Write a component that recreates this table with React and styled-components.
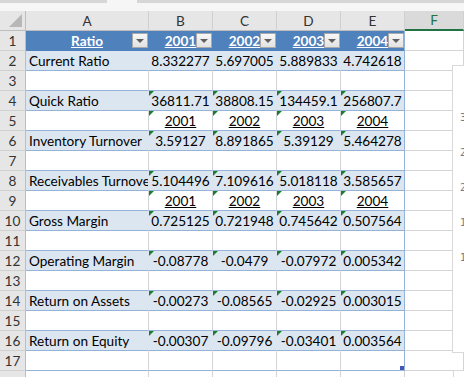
import React from 'react';
import styled, { createGlobalStyle, css } from 'styled-components';

const GlobalStyle = createGlobalStyle`
  body {
    margin: 0;
    background: #fff;
    font-family: Lato, "Liberation Sans", sans-serif;
    overflow: hidden;
  }
`;

const Page = styled.div`
  position: relative;
  width: 464px;
  height: 377px;
  overflow: hidden;
`;

const TopStrip = styled.div`
  height: 11px;
  display: flex;
  align-items: flex-start;
  background: #f6f6f6;
`;

const StripEdge = styled.div`
  height: 3px;
  width: ${(p) => (p.$w ? `${p.$w}px` : 'auto')};
  flex: ${(p) => (p.$w ? 'none' : 1)};
  background: ${(p) => p.$color};
`;

const Sheet = styled.div`
  display: grid;
  grid-template-columns: 26px 123px repeat(4, 64px) 59px;
  grid-auto-rows: 20px;
  font-size: 13.6px;
`;

const Corner = styled.div`
  position: relative;
  box-sizing: border-box;
  background: #e6e6e6;
  border-right: 1px solid #bdbdbd;
  border-bottom: 1px solid #bdbdbd;

  &::after {
    content: '';
    position: absolute;
    right: 3px;
    bottom: 3px;
    border-left: 13px solid transparent;
    border-bottom: 13px solid #b7b7b7;
  }
`;

const ColHead = styled.div`
  box-sizing: border-box;
  display: flex;
  align-items: center;
  justify-content: center;
  background: ${(p) => (p.$active ? '#dadada' : '#e6e6e6')};
  color: ${(p) => (p.$active ? '#217346' : '#333')};
  border-right: 1px solid #d0d0d0;
  border-bottom: ${(p) => (p.$active ? '2px solid #217346' : '1px solid #bdbdbd')};
`;

const RowHead = styled.div`
  box-sizing: border-box;
  padding-top: 1px;
  line-height: 18px;
  text-align: center;
  background: #e6e6e6;
  color: #333;
  border-right: 1px solid #bdbdbd;
  border-bottom: 1px solid #d0d0d0;
`;

const flagMark = css`
  &::before {
    content: '';
    position: absolute;
    left: 0;
    top: 0;
    border-top: 5px solid #1e7d32;
    border-right: 5px solid transparent;
  }
`;

const Cell = styled.div`
  position: relative;
  box-sizing: border-box;
  padding: 1px ${(p) => (p.$label ? '0 0 3px' : '2px 0')};
  line-height: 18px;
  text-align: ${(p) => (p.$label ? 'left' : 'center')};
  white-space: nowrap;
  overflow: hidden;
  color: #000;
  background: ${(p) => (p.$blue ? '#dce6f1' : '#fff')};
  border-bottom: 1px solid ${(p) => (p.$outside ? '#d4d4d4' : '#95b3d7')};
  border-right: 1px solid
    ${(p) => (p.$last ? '#95b3d7' : p.$blue ? '#dce6f1' : '#d4d4d4')};
  ${(p) => p.$flag && flagMark}
  ${(p) => p.$underline && 'text-decoration: underline;'}
`;

const HeadCell = styled.div`
  position: relative;
  box-sizing: border-box;
  padding: 1px 2px 0;
  line-height: 18px;
  text-align: center;
  white-space: nowrap;
  overflow: hidden;
  color: #fff;
  font-weight: 700;
  text-decoration: underline;
  background: #4f81bd;
  border-right: 1px solid ${(p) => (p.$last ? '#95b3d7' : '#4f81bd')};
`;

const FilterButton = styled.span`
  position: absolute;
  right: 0;
  top: 2px;
  width: 16px;
  height: 15px;
  box-sizing: border-box;
  border: 1px solid #a9a9a9;
  background: linear-gradient(#f7f7f7, #e2e2e2);
  display: flex;
  align-items: center;
  justify-content: center;

  &::after {
    content: '';
    border-left: 4px solid transparent;
    border-right: 4px solid transparent;
    border-top: 4px solid #5f5f5f;
  }
`;

const ResizeHandle = styled.span`
  position: absolute;
  right: 0;
  bottom: 0;
  width: 4px;
  height: 4px;
  background: #4357b8;
`;

const ChartFrame = styled.div`
  position: absolute;
  left: 452px;
  top: 65px;
  width: 40px;
  height: 288px;
  box-sizing: border-box;
  background: #fff;
  border: 1px solid #d9d9d9;
  display: flex;
  flex-direction: column;
  gap: 20px;
  padding: 44px 0 0 7px;
`;

const AxisLabel = styled.span`
  font-size: 10px;
  line-height: 15px;
  color: #7a7a7a;
  font-family: "DejaVu Sans", sans-serif;
`;

const NextChart = styled.div`
  position: absolute;
  left: 453px;
  top: 370px;
  width: 40px;
  height: 40px;
  border-top: 1px solid #d9d9d9;
  border-left: 1px solid #d9d9d9;
  background: #fff;
`;

const years = ['2001', '2002', '2003', '2004'];

const rows = [
  { label: 'Current Ratio', values: ['8.332277', '5.697005', '5.889833', '4.742618'] },
  null,
  { label: 'Quick Ratio', values: ['36811.71', '38808.15', '134459.1', '256807.7'], flag: true },
  { label: '', values: years, flag: true, underline: true },
  { label: 'Inventory Turnover', values: ['3.59127', '8.891865', '5.39129', '5.464278'], flag: true },
  null,
  { label: 'Receivables Turnover', values: ['5.104496', '7.109616', '5.018118', '3.585657'], flag: true },
  { label: '', values: years, flag: true, underline: true },
  { label: 'Gross Margin', values: ['0.725125', '0.721948', '0.745642', '0.507564'], flag: true },
  null,
  { label: 'Operating Margin', values: ['-0.08778', '-0.0479', '-0.07972', '0.005342'], flag: true },
  null,
  { label: 'Return on Assets', values: ['-0.00273', '-0.08565', '-0.02925', '0.003015'], flag: true },
  null,
  { label: 'Return on Equity', values: ['-0.00307', '-0.09796', '-0.03401', '0.003564'], flag: true },
  null,
];

const App = () => (
  <Page>
    <GlobalStyle />
    <TopStrip>
      <StripEdge $w={107} $color="#d6d6d6" />
      <StripEdge $w={30} $color="#f6f6f6" />
      <StripEdge $color="#d6d6d6" />
    </TopStrip>
    <Sheet>
      <Corner />
      {['A', 'B', 'C', 'D', 'E'].map((c) => (
        <ColHead key={c}>{c}</ColHead>
      ))}
      <ColHead $active>F</ColHead>

      <RowHead>1</RowHead>
      <HeadCell>
        Ratio
        <FilterButton />
      </HeadCell>
      {years.map((y, i) => (
        <HeadCell key={y} $last={i === 3}>
          {y}
          <FilterButton />
        </HeadCell>
      ))}
      <Cell $outside />

      {rows.map((row, idx) => {
        const n = idx + 2;
        const blue = n % 2 === 0;
        return (
          <React.Fragment key={n}>
            <RowHead>{n}</RowHead>
            <Cell $label $blue={blue}>
              {row ? row.label : ''}
            </Cell>
            {[0, 1, 2, 3].map((i) => (
              <Cell
                key={i}
                $blue={blue}
                $last={i === 3}
                $flag={row && row.flag}
                $underline={row && row.underline}
              >
                {row ? row.values[i] : ''}
                {n === 17 && i === 3 && <ResizeHandle />}
              </Cell>
            ))}
            <Cell $outside />
          </React.Fragment>
        );
      })}

      <RowHead />
      {[0, 1, 2, 3, 4, 5].map((i) => (
        <Cell key={i} $outside />
      ))}
    </Sheet>

    <ChartFrame>
      {['3', '2.5', '2', '1.5', '1'].map((t) => (
        <AxisLabel key={t}>{t}</AxisLabel>
      ))}
    </ChartFrame>
    <NextChart />
  </Page>
);

export default App;
